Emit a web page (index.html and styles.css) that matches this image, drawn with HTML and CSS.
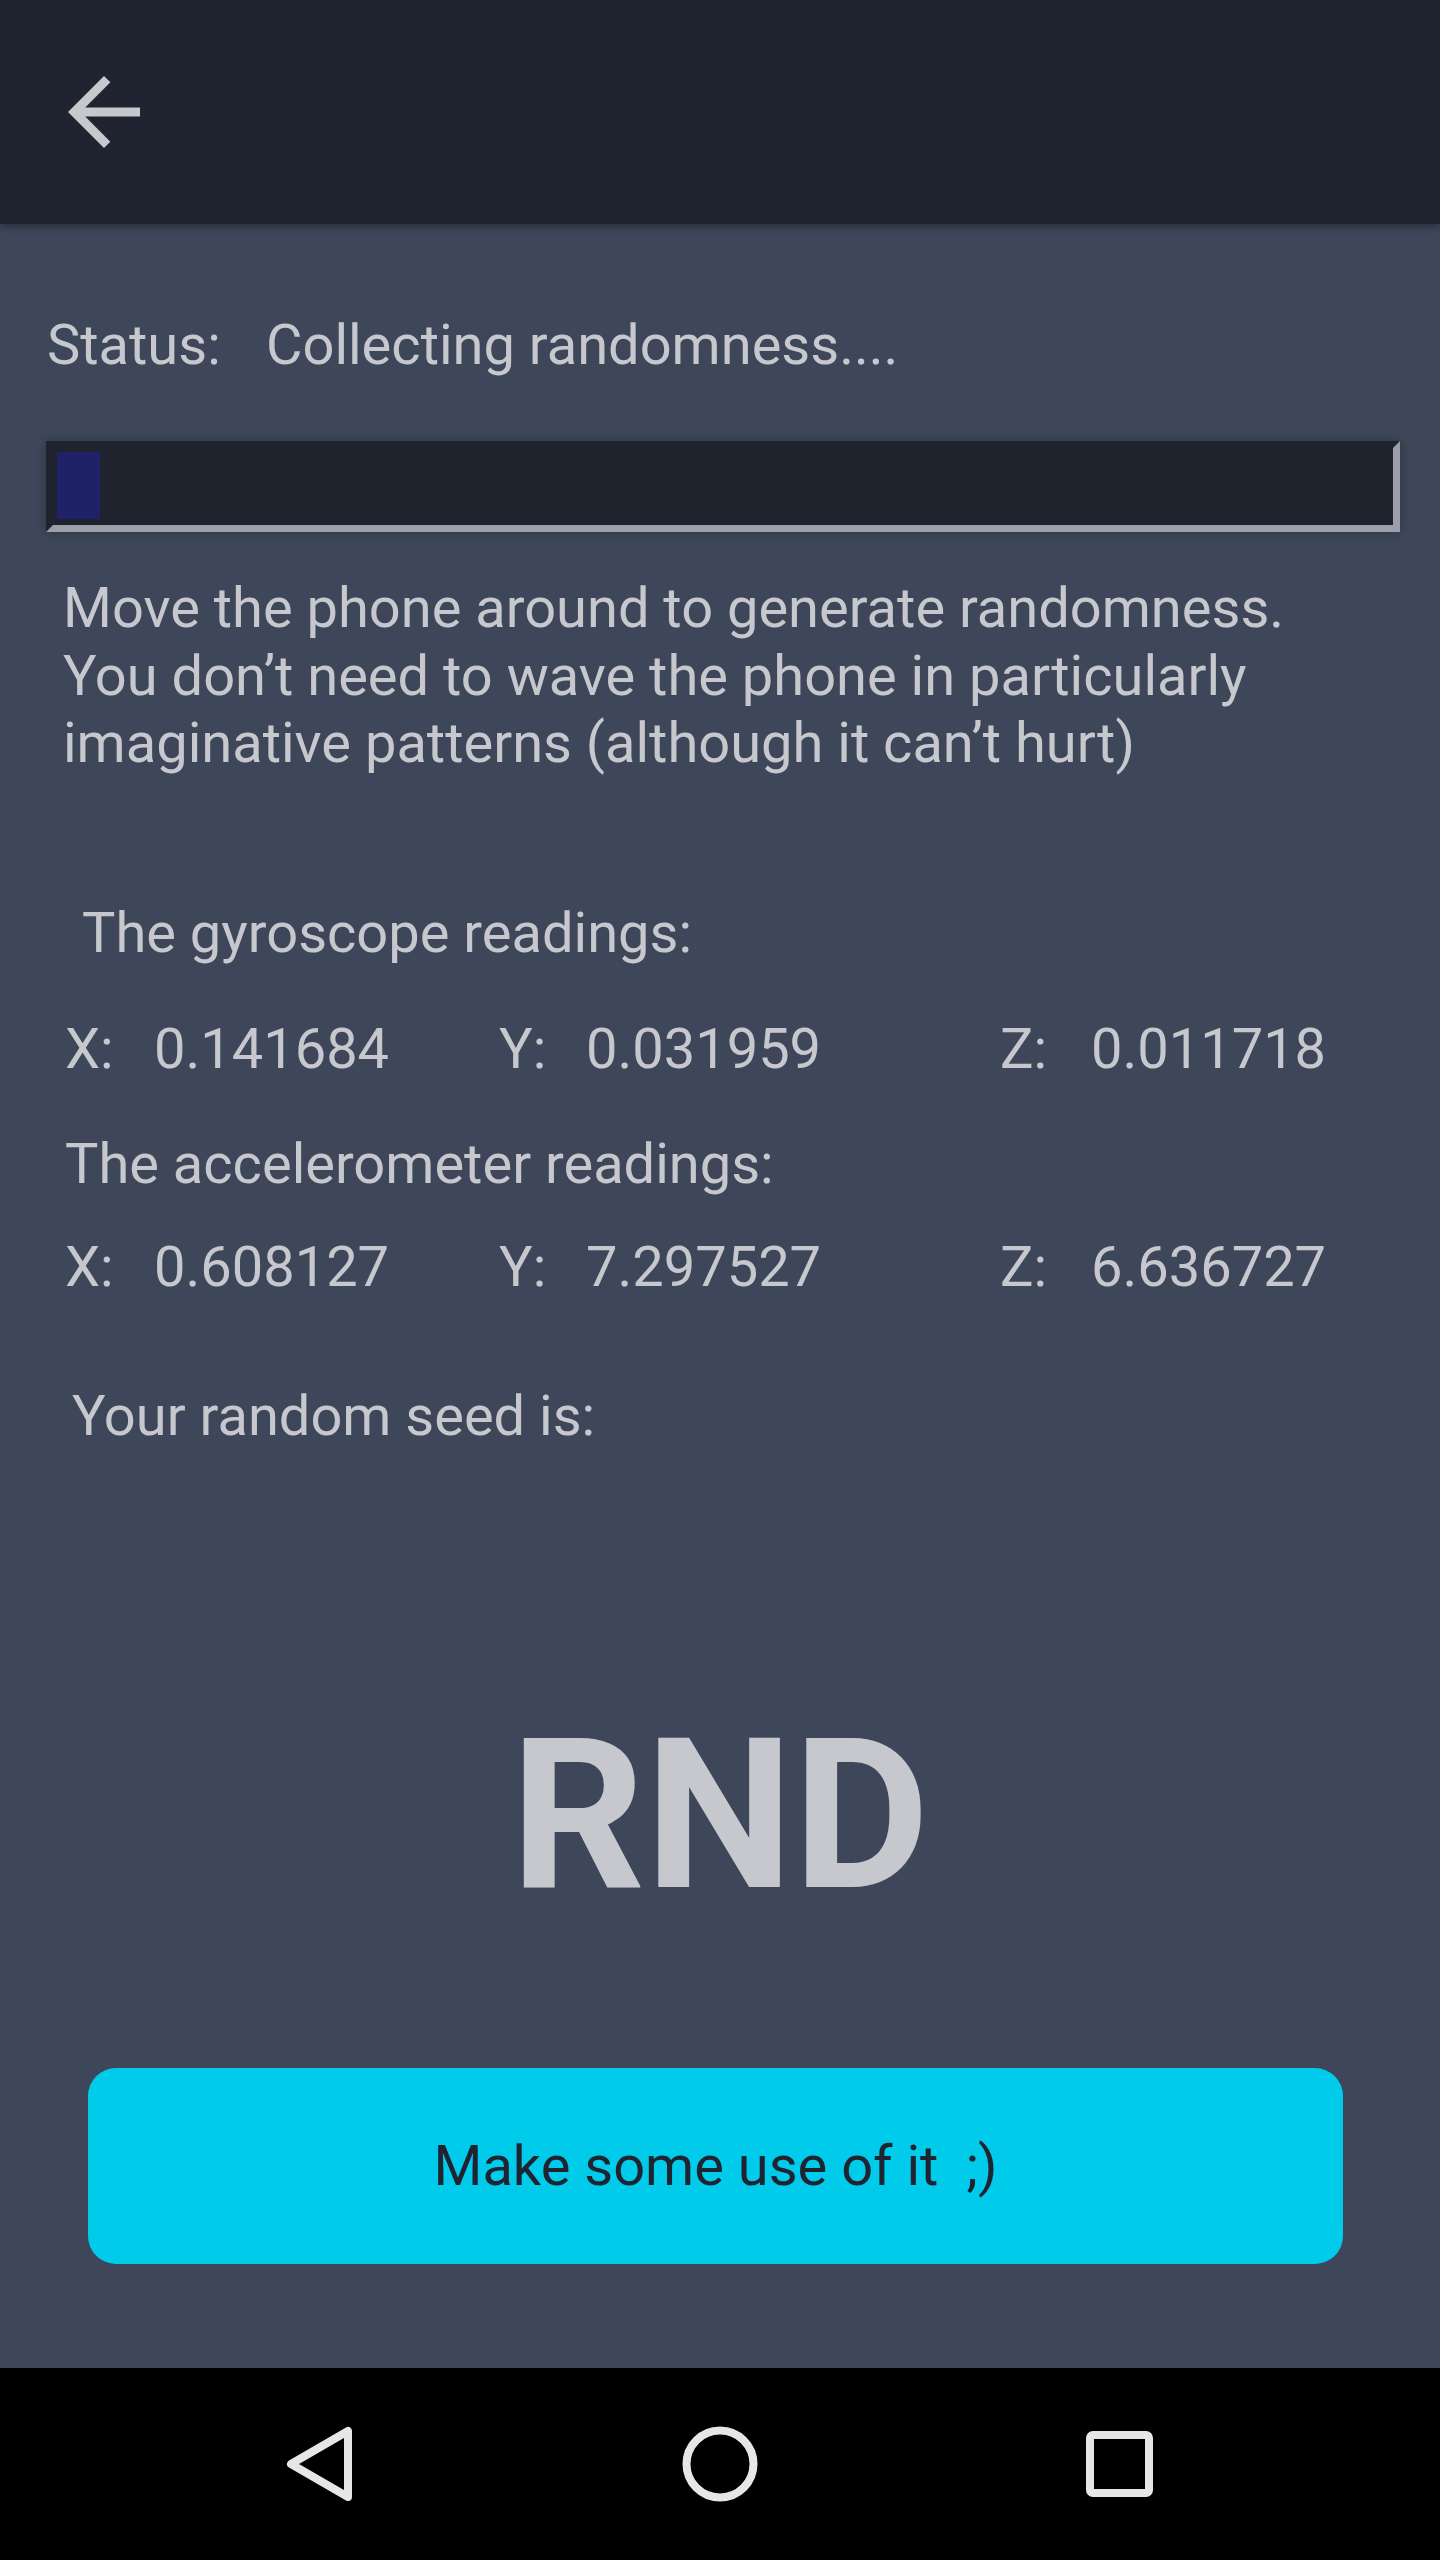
FILE: index.html
```html
<!DOCTYPE html>
<html lang="en">
<head>
<meta charset="utf-8">
<title>Random seed</title>
<link rel="stylesheet" href="styles.css">
</head>
<body>
<div class="screen">
  <header class="appbar">
    <svg class="back" viewBox="0 0 24 24" width="108" height="108" aria-label="Back">
      <path d="M20 11H7.83l5.59-5.59L12 4l-8 8 8 8 1.41-1.41L7.83 13H20v-2z" fill="#c6c8cd"/>
    </svg>
  </header>

  <main class="content">
    <div class="status">
      <span class="status-label">Status:</span>
      <span class="status-value">Collecting randomness....</span>
    </div>

    <div class="progress">
      <div class="progress-fill"></div>
    </div>

    <p class="hint">Move the phone around to generate randomness.<br>You don’t need to wave the phone in particularly<br>imaginative patterns (although it can’t hurt)</p>

    <div class="label label-gyro">The gyroscope readings:</div>
    <div class="readings readings-gyro">
      <span class="axis ax-x">X:</span><span class="val val-x">0.141684</span>
      <span class="axis ax-y">Y:</span><span class="val val-y">0.031959</span>
      <span class="axis ax-z">Z:</span><span class="val">0.011718</span>
    </div>

    <div class="label label-accel">The accelerometer readings:</div>
    <div class="readings readings-accel">
      <span class="axis ax-x">X:</span><span class="val val-x">0.608127</span>
      <span class="axis ax-y">Y:</span><span class="val val-y">7.297527</span>
      <span class="axis ax-z">Z:</span><span class="val">6.636727</span>
    </div>

    <div class="label label-seed">Your random seed is:</div>

    <div class="seed">RND</div>

    <button class="use-btn">Make some use of it &nbsp;;)</button>
  </main>

  <nav class="navbar">
    <svg class="nav-icon" viewBox="0 0 100 100" width="100" height="100" aria-label="Back">
      <polygon points="21,50 78,17 78,83" fill="none" stroke="#e6e6e6" stroke-width="8" stroke-linejoin="round"/>
    </svg>
    <svg class="nav-icon" viewBox="0 0 100 100" width="100" height="100" aria-label="Home">
      <circle cx="50" cy="50" r="33.5" fill="none" stroke="#e6e6e6" stroke-width="8"/>
    </svg>
    <svg class="nav-icon" viewBox="0 0 100 100" width="100" height="100" aria-label="Recents">
      <rect x="20" y="21" width="59" height="58" rx="3" fill="none" stroke="#e6e6e6" stroke-width="8"/>
    </svg>
  </nav>
</div>
</body>
</html>
```

FILE: styles.css
```css
* {
  box-sizing: border-box;
}

html, body {
  margin: 0;
  padding: 0;
  background: #000;
}

.screen {
  width: 1440px;
  height: 2560px;
  display: flex;
  flex-direction: column;
  background: #3e4759;
  font-family: Roboto, "Liberation Sans", sans-serif;
  color: #c6c8cd;
  font-size: 56px;
  line-height: 68px;
}

.appbar {
  height: 224px;
  flex: none;
  background: #1f2430;
  display: flex;
  align-items: center;
  padding-left: 50px;
  box-shadow: 0 3px 8px rgba(0, 0, 0, 0.35);
  position: relative;
  z-index: 1;
}

.back {
  display: block;
}

.content {
  flex: 1;
  display: flex;
  flex-direction: column;
}

.status {
  margin-top: 87px;
  padding-left: 47px;
  display: flex;
}

.status-label {
  width: 219px;
}

.progress {
  margin: 62px 0 0 46px;
  width: 1354px;
  height: 91px;
  background: #1f232d;
  border: 7px solid;
  border-color: #1f232d #9a9fab #9a9fab #1f232d;
  padding: 4px;
  box-shadow: 0 0 10px rgba(0, 0, 0, 0.28);
}

.progress-fill {
  width: 43px;
  height: 67px;
  background: #1f2266;
}

.hint {
  margin: 43px 0 0 0;
  padding-left: 63px;
  line-height: 67.5px;
}

.label {
  white-space: nowrap;
}

.label-gyro {
  margin-top: 121px;
  padding-left: 82px;
}

.readings {
  display: flex;
  padding-left: 65px;
  white-space: nowrap;
}

.readings-gyro {
  margin-top: 48px;
}

.label-accel {
  margin-top: 47px;
  padding-left: 65px;
}

.readings-accel {
  margin-top: 35px;
}

.ax-x {
  width: 89px;
}

.val-x {
  width: 345px;
}

.ax-y {
  width: 87px;
}

.val-y {
  width: 414px;
}

.ax-z {
  width: 91px;
}

.label-seed {
  margin-top: 81px;
  padding-left: 72px;
}

.seed {
  margin-top: 242px;
  text-align: center;
  font-weight: 700;
  font-size: 210px;
  line-height: 246px;
  color: #c6c8cd;
}

.use-btn {
  margin: 130px 0 0 88px;
  width: 1255px;
  height: 196px;
  border: none;
  border-radius: 28px;
  background: #00cbeb;
  color: #1f2430;
  font-family: Roboto, "Liberation Sans", sans-serif;
  font-size: 56px;
  padding: 0;
  text-align: center;
}

.navbar {
  height: 192px;
  flex: none;
  background: #000;
  display: flex;
  align-items: center;
  justify-content: center;
  gap: 300px;
}

.nav-icon {
  display: block;
}
```
